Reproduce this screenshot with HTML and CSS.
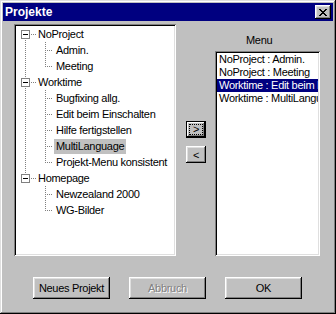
FILE: index.html
```html
<!DOCTYPE html>
<html lang="de">
<head>
    <title>Projekte</title>
    <link rel="stylesheet" href="styles.css">
</head>
<body>

    <!-- Dialog window -->
    <div class="window">
        <div class="titlebar">
            <span class="title">Projekte</span>
            <button class="close-btn">
                <svg width="8" height="7" viewBox="0 0 8 7" shape-rendering="crispEdges">
                    <path d="M0 0h2v1h-2z M6 0h2v1h-2z M1 1h2v1h-2z M5 1h2v1h-2z M2 2h4v1h-4z M3 3h2v1h-2z M2 4h4v1h-4z M1 5h2v1h-2z M5 5h2v1h-2z M0 6h2v1h-2z M6 6h2v1h-2z" fill="#000"/>
                </svg>
            </button>
        </div>

        <div class="client">
            <div class="panels">

                <!-- Project tree -->
                <div class="tree-box sunken">
                    <ul class="tree">
                        <li>
                            <div class="row"><span class="expander"></span><span class="label">NoProject</span></div>
                            <ul class="children">
                                <li><div class="row"><span class="label">Admin.</span></div></li>
                                <li><div class="row"><span class="label">Meeting</span></div></li>
                            </ul>
                        </li>
                        <li>
                            <div class="row"><span class="expander"></span><span class="label">Worktime</span></div>
                            <ul class="children">
                                <li><div class="row"><span class="label">Bugfixing allg.</span></div></li>
                                <li><div class="row"><span class="label">Edit beim Einschalten</span></div></li>
                                <li><div class="row"><span class="label">Hilfe fertigstellen</span></div></li>
                                <li><div class="row"><span class="label selected">MultiLanguage</span></div></li>
                                <li><div class="row"><span class="label">Projekt-Menu konsistent</span></div></li>
                            </ul>
                        </li>
                        <li>
                            <div class="row"><span class="expander"></span><span class="label">Homepage</span></div>
                            <ul class="children">
                                <li><div class="row"><span class="label">Newzealand 2000</span></div></li>
                                <li><div class="row"><span class="label">WG-Bilder</span></div></li>
                            </ul>
                        </li>
                    </ul>
                </div>

                <!-- Move buttons -->
                <div class="move-buttons">
                    <button class="btn small default"><span class="focus">&gt;</span></button>
                    <button class="btn small">&lt;</button>
                </div>

                <!-- Menu list -->
                <div class="menu-col">
                    <div class="menu-label">Menu</div>
                    <ul class="listbox sunken">
                        <li>NoProject : Admin.</li>
                        <li>NoProject : Meeting</li>
                        <li class="selected">Worktime : Edit beim Einschalten</li>
                        <li>Worktime : MultiLanguage</li>
                    </ul>
                </div>
            </div>

            <div class="actions">
                <button class="btn">Neues Projekt</button>
                <button class="btn" disabled>Abbruch</button>
                <button class="btn">OK</button>
            </div>
        </div>
    </div>

</body>
</html>
```

FILE: styles.css
```css
        body {
            margin: 0;
            font-family: "Liberation Sans", Arial, sans-serif;
            font-size: 11px;
            letter-spacing: -0.3px;
            color: #000;
        }

        .window {
            width: 336px;
            height: 314px;
            box-sizing: border-box;
            padding: 3px;
            background-color: #c0c0c0;
            box-shadow: inset -1px -1px #000, inset 1px 1px #dfdfdf,
                        inset -2px -2px #808080, inset 2px 2px #fff;
        }

        .titlebar {
            height: 18px;
            background-color: #000080;
            color: #fff;
            display: flex;
            align-items: center;
            justify-content: space-between;
            padding: 0 2px;
        }

        .title {
            font-weight: bold;
            font-size: 12px;
            letter-spacing: 0;
        }

        .close-btn {
            width: 16px;
            height: 14px;
            padding: 0;
            border: none;
            background-color: #c0c0c0;
            display: flex;
            align-items: center;
            justify-content: center;
            box-shadow: inset -1px -1px #000, inset 1px 1px #fff,
                        inset -2px -2px #808080, inset 2px 2px #dfdfdf;
        }

        .client {
            padding: 3px 0 0 11px;
        }

        .panels {
            display: flex;
            height: 232px;
        }

        .sunken {
            background-color: #fff;
            box-shadow: inset 1px 1px #808080, inset -1px -1px #fff,
                        inset 2px 2px #000, inset -2px -2px #dfdfdf;
        }

        /* tree */
        .tree-box {
            width: 162px;
            height: 232px;
            box-sizing: border-box;
            padding: 2px;
            overflow: hidden;
        }

        .tree, .children {
            list-style: none;
            margin: 0;
            padding: 0;
        }

        .tree li {
            position: relative;
        }

        .tree > li::before,
        .children > li::before {
            content: "";
            position: absolute;
            left: 9px;
            top: 0;
            bottom: 0;
            width: 1px;
            background: repeating-linear-gradient(to bottom, #808080 0 1px, transparent 1px 2px);
        }

        .tree > li:first-child::before {
            top: 8px;
        }

        .tree > li:last-child::before,
        .children > li:last-child::before {
            bottom: auto;
            height: 9px;
        }

        .children > li::before {
            left: 29px;
        }

        .children > li::after {
            content: "";
            position: absolute;
            left: 31px;
            top: 8px;
            width: 6px;
            height: 1px;
            background: repeating-linear-gradient(to right, #808080 0 1px, transparent 1px 2px);
        }

        .row {
            display: flex;
            align-items: center;
            height: 16px;
            padding-left: 5px;
            white-space: nowrap;
        }

        .children .row {
            padding-left: 38px;
        }

        .expander {
            position: relative;
            z-index: 1;
            width: 9px;
            height: 9px;
            box-sizing: border-box;
            border: 1px solid #808080;
            background-color: #fff;
            margin-right: 6px;
        }

        .expander::before {
            content: "";
            position: absolute;
            left: 1px;
            top: 3px;
            width: 5px;
            height: 1px;
            background-color: #000;
        }

        .expander::after {
            content: "";
            position: absolute;
            left: 9px;
            top: 3px;
            width: 5px;
            height: 1px;
            background: repeating-linear-gradient(to right, #808080 0 1px, transparent 1px 2px);
        }

        .label {
            padding: 0 2px;
            height: 15px;
            line-height: 15px;
        }

        .label.selected {
            background-color: #c0c0c0;
        }

        /* buttons */
        .btn {
            font: inherit;
            letter-spacing: inherit;
            color: #000;
            width: 77px;
            height: 22px;
            padding: 0;
            border: none;
            background-color: #c0c0c0;
            box-shadow: inset -1px -1px #000, inset 1px 1px #fff,
                        inset -2px -2px #808080, inset 2px 2px #dfdfdf;
        }

        .btn:disabled {
            color: #808080;
            text-shadow: 1px 1px 0 #fff;
        }

        .btn.small {
            width: 20px;
            height: 17px;
            display: flex;
            align-items: center;
            justify-content: center;
        }

        .btn.default {
            box-shadow: inset 0 0 0 1px #000, inset -2px -2px #000,
                        inset 2px 2px #fff, inset -3px -3px #808080;
        }

        .focus {
            outline: 1px dotted #000;
            padding: 0 3px;
            line-height: 9px;
        }

        .move-buttons {
            margin-left: 10px;
            padding-top: 97px;
            display: flex;
            flex-direction: column;
            gap: 8px;
        }

        /* menu list */
        .menu-col {
            margin-left: 9px;
            width: 105px;
        }

        .menu-label {
            height: 27px;
            box-sizing: border-box;
            padding: 9px 0 0 31px;
            line-height: 14px;
        }

        .listbox {
            list-style: none;
            margin: 0;
            padding: 2px;
            height: 205px;
            box-sizing: border-box;
            overflow: hidden;
        }

        .listbox li {
            line-height: 13px;
            padding-left: 2px;
            white-space: nowrap;
            overflow: hidden;
        }

        .listbox li.selected {
            background-color: #000080;
            color: #fff;
        }

        .actions {
            display: flex;
            gap: 19px;
            margin-top: 21px;
            padding-left: 19px;
        }
```
